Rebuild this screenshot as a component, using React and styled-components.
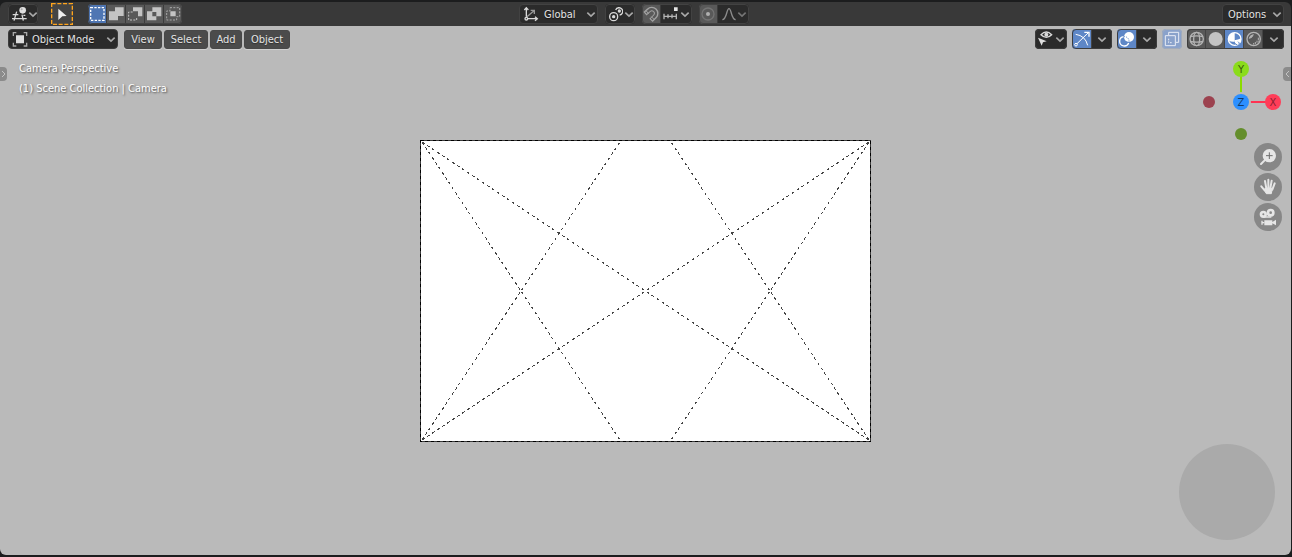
import React from "react";
import styled, { createGlobalStyle, css } from "styled-components";

const GlobalStyle = createGlobalStyle`
  * { box-sizing: border-box; }
  body { margin: 0; background: #1c1d1e; }
  body, button, select {
    font-family: "DejaVu Sans Condensed", "DejaVu Sans", sans-serif;
    font-size: 11px;
    line-height: 18px;
  }
`;

const Editor = styled.div`
  display: flex;
  flex-direction: column;
  min-height: 100vh;
  padding: 2px 1px 2px 0;
`;

const TopBar = styled.header`
  display: grid;
  grid-template-columns: 1fr auto 1fr;
  align-items: center;
  height: 24px;
  padding: 0 7px 0 8px;
  background: #393939;
  border-radius: 6px 6px 0 0;
`;

const Cluster = styled.div`
  display: flex;
  align-items: center;
  gap: ${(p) => p.$gap || 0}px;
  justify-content: ${(p) => (p.$end ? "flex-end" : "flex-start")};
  padding-right: ${(p) => p.$trail || 0}px;
`;

const edge = (p) => (p.$pale ? "#a2abba" : p.$raised ? "#3d3d3d" : "#424242");

const Group = styled.div`
  display: flex;
  height: 20px;
  border-radius: 4px;
  overflow: hidden;
  position: relative;
  background: ${(p) => (p.$raised ? "#444" : "#3c3c3c")};
  gap: 1px;
  &::after {
    content: "";
    position: absolute;
    inset: 0;
    border: 1px solid ${edge};
    border-radius: 4px;
    pointer-events: none;
  }
`;

const tones = {
  dark: "#2b2b2b",
  grey: "#595959",
  blue: "#4f76b3",
  bright: "#5e87c7",
  pale: "#8aa2cb",
};

const Cell = styled.button`
  display: flex;
  align-items: center;
  justify-content: ${(p) => (p.$center ? "center" : "flex-start")};
  flex: none;
  width: ${(p) => p.$w || 18}px;
  height: 20px;
  padding: 0;
  border: 0;
  color: #d9d9d9;
  background: ${(p) => tones[p.$tone || "dark"]};
`;

const ToolButton = styled.button`
  width: 22px;
  height: 22px;
  padding: 0;
  border: 0;
  background: #444;
  display: flex;
`;

const fieldLook = css`
  height: 20px;
  border: 1px solid ${edge};
  border-radius: 4px;
  background: #2b2b2b;
  color: #e4e4e4;
  text-shadow: 0 1px 1px #0008;
`;

const Field = styled.label`
  ${fieldLook}
  display: flex;
  align-items: center;
  width: ${(p) => p.$w}px;
`;

const FieldSelect = styled.select`
  appearance: none;
  flex: 1;
  min-width: 0;
  height: 20px;
  padding: 2px 0 0;
  margin-left: 4px;
  border: 0;
  background: transparent;
  color: inherit;
  text-shadow: inherit;
`;

const OptionsButton = styled.button`
  ${fieldLook}
  display: flex;
  align-items: center;
  justify-content: space-between;
  width: 62px;
  padding: 0 0 0 5px;
`;

const OptionsText = styled.span`
  padding-top: 2px;
`;

const MenuButton = styled.button`
  height: 19px;
  width: ${(p) => p.$w}px;
  padding: 0;
  border: 1px solid #484848;
  border-radius: 3px;
  background: #4b4b4b;
  color: #e4e4e4;
  box-shadow: 0 1px 0 #d0d0d0;
  text-shadow: 0 1px 1px #0006;
`;

const Viewport = styled.main`
  flex: 1;
  position: relative;
  display: flex;
  flex-direction: column;
  overflow: hidden;
  background: #bababa;
  border-radius: 0 0 6px 6px;
`;

const ViewBar = styled.div`
  position: relative;
  display: flex;
  justify-content: space-between;
  align-items: center;
  height: 26px;
  padding: 0 7px 0 8px;
`;

const ViewInfo = styled.div`
  position: relative;
  width: max-content;
  padding: 7px 19px;
  color: #fff;
  line-height: 20px;
  text-shadow: 1px 1px 2px #0009;
`;

const CameraFrame = styled.svg`
  position: absolute;
  top: 50%;
  left: 50%;
  width: 452px;
  height: 302px;
  margin: -151px 0 0 -226px;
`;

const SideTab = styled.button`
  position: absolute;
  top: 41px;
  ${(p) => p.$side}: 0;
  width: ${(p) => (p.$side === "left" ? 7 : 8)}px;
  height: 14px;
  padding: 0;
  border: 0;
  border-radius: ${(p) => (p.$side === "left" ? "0 4px 4px 0" : "4px 0 0 4px")};
  background: #8b8b8b;
  display: flex;
  align-items: center;
  justify-content: center;
`;

const AxisGizmo = styled.svg`
  position: absolute;
  top: 34px;
  right: 7px;
  width: 84px;
  height: 84px;
`;

const NavStack = styled.div`
  position: absolute;
  top: 117px;
  right: 9px;
  display: flex;
  flex-direction: column;
  gap: 2px;
`;

const NavButton = styled.button`
  width: 28px;
  height: 28px;
  padding: 0;
  border: 0;
  border-radius: 50%;
  background: #878787;
  display: flex;
`;

const NavPad = styled.div`
  position: absolute;
  right: 16px;
  bottom: 15px;
  width: 96px;
  height: 96px;
  border-radius: 50%;
  background: #aaaaaa;
`;

const IconSvg = styled.svg`
  flex: none;
`;

const Icon = ({ w = 18, h = 20, children }) => (
  <IconSvg width={w} height={h} viewBox={`0 0 ${w * 3} ${h * 3}`} fill="none"
    stroke="#d9d9d9" strokeWidth="4" aria-hidden="true">
    {children}
  </IconSvg>
);

const Chevron = ({ color = "#a8a8a8" }) => (
  <IconSvg width="12" height="20" viewBox="0 0 36 60" fill="none" stroke={color}
    strokeWidth="5" aria-hidden="true">
    <path d="M7 26 L18 36 L29 26" />
  </IconSvg>
);

const SELECT_MODES = [
  ["Set selection", <path d="M8 11H48V49H8Z" stroke="#fff" strokeWidth="4" strokeDasharray="7 4" />],
  ["Extend selection", <path d="M24 10H50V36H33V49H6V22H24Z" fill="#c4c4c4" stroke="none" />],
  ["Subtract selection", <>
    <path d="M21 10H49V37H36V22H21Z" fill="#c4c4c4" stroke="none" />
    <path d="M20 24H8V48H32V38" stroke="#c4c4c4" strokeWidth="3" strokeDasharray="6 4" />
  </>],
  ["Invert selection", <path fillRule="evenodd" d="M22 10H49V37H34V49H6V22H22ZM22 24V37H34V24Z" fill="#c4c4c4" stroke="none" />],
  ["Intersect selection", <>
    <path d="M19 22H35V37H19Z" fill="#c4c4c4" stroke="none" />
    <path d="M18 11H47V38H38V48H8V21H18Z" stroke="#a8a8a8" strokeWidth="3" strokeDasharray="6 4" />
  </>],
];

const SHADING = [
  ["Wireframe", "grey", <g stroke="#b4b4b4" strokeWidth="4">
    <circle cx="29" cy="30" r="20" /><ellipse cx="29" cy="30" rx="9" ry="20" />
    <path d="M10 23Q29 18 48 23M10 37Q29 42 48 37" />
  </g>],
  ["Solid", "grey", <circle cx="29" cy="30" r="21" fill="#c4c4c4" stroke="none" />],
  ["Material preview", "bright", <>
    <circle cx="29" cy="30" r="19" stroke="#fff" strokeWidth="4" />
    <path d="M29 11A19 19 0 0 0 10 34Q20 40 29 38Z" fill="#fff" stroke="none" />
    <path d="M28 34Q40 33 48 28A19 19 0 0 1 36 48Q29 44 28 34Z" fill="#fff" stroke="none" />
    <path d="M32 44l5 5M39 38l5 5M39 47l5-5" stroke="#5e87c7" strokeWidth="3" />
  </>],
  ["Rendered", "grey", <g stroke="#b4b4b4" strokeWidth="4">
    <circle cx="29" cy="30" r="20" />
    <path d="M16 28A14 14 0 0 1 28 17L23 25Z" fill="#b4b4b4" strokeWidth="3" />
    <path d="M43 26V33M39 35V41M34 39V45M44 35V38M29 42V47" strokeWidth="3" />
  </g>],
];

const ToolSelect = () => (
  <ToolButton aria-label="Select tool" aria-pressed="true">
    <Icon w={22} h={22}>
      <path d="M2 2H64V64H2Z" stroke="#ffa41c" strokeWidth="4" strokeDasharray="12 5" />
      <path d="M22 17L47 39L34 40L22 51Z" fill="#eee" stroke="none" />
    </Icon>
  </ToolButton>
);

function HeaderTop() {
  return (
    <TopBar>
      <Cluster $gap={13}>
        <Group>
          <Cell $w={30} aria-label="Editor type">
            <Icon w={19}>
              <path d="M14 32H31M12 44H56M26 23L18 50M42 32L46 50M46 34H52" />
              <circle cx="44" cy="19" r="10" fill="#e0e0e0" stroke="none" />
              <circle cx="41" cy="16" r="3" fill="#aaa" stroke="none" />
            </Icon>
            <Chevron />
          </Cell>
        </Group>
        <Cluster $gap={15}>
          <ToolSelect />
          <Group>
            {SELECT_MODES.map(([label, art], i) => (
              <Cell key={label} $tone={i ? "grey" : "blue"} aria-label={label} aria-pressed={i === 0}>
                <Icon>{art}</Icon>
              </Cell>
            ))}
          </Group>
        </Cluster>
      </Cluster>
      <Cluster $gap={7} $trail={24}>
        <Field $w={79}>
          <Icon w={20} h={18}>
            <g transform="translate(-3 -3)">
              <path d="M22 40L45 20M35 19H46V30" stroke="#999" />
              <path d="M22 38V12M16 18L22 11L28 18M26 44H54M48 38L55 44L48 50" />
              <circle cx="22" cy="44" r="4" />
            </g>
          </Icon>
          <FieldSelect aria-label="Transform orientation"><option>Global</option></FieldSelect>
          <Chevron />
        </Field>
        <Group>
          <Cell $w={30} aria-label="Pivot point">
            <Icon>
              <circle cx="26" cy="38" r="12" />
              <path d="M32 18A11 11 0 1 1 44 33" />
              <circle cx="26" cy="38" r="5" fill="#d9d9d9" stroke="none" />
              <circle cx="43" cy="21" r="5" fill="#d9d9d9" stroke="none" />
            </Icon>
            <Chevron />
          </Cell>
        </Group>
        <Group>
          <Cell $tone="grey" aria-label="Snap">
            <Icon>
              <path d="M9 29L20 19A13 13 0 0 1 39 37L27 49" stroke="#a2a2a2" strokeWidth="14" />
              <path d="M12 27L21 19A12 12 0 0 1 38 37L29 46" stroke="#595959" strokeWidth="7" />
              <path d="M12 20L20 29M28 38L36 46" stroke="#a2a2a2" strokeWidth="3" />
            </Icon>
          </Cell>
          <Cell $w={31} aria-label="Snap to">
            <Icon>
              <path d="M8 37H47M9 29V46M21 31V43M33 31V43M46 29V46" stroke="#b5b5b5" />
              <path d="M39 10H50V21H39Z" fill="#e6e6e6" stroke="none" />
            </Icon>
            <Chevron />
          </Cell>
        </Group>
        <Group>
          <Cell $tone="grey" aria-label="Proportional editing">
            <Icon>
              <circle cx="27" cy="30" r="18" stroke="#747474" />
              <circle cx="27" cy="30" r="6" fill="#b0b0b0" stroke="none" />
            </Icon>
          </Cell>
          <Cell $w={31} aria-label="Proportional falloff">
            <Icon>
              <path d="M13 47C27 47 25 14 33 14S39 47 53 47" stroke="#8c8c8c" />
            </Icon>
            <Chevron color="#757575" />
          </Cell>
        </Group>
      </Cluster>
      <Cluster $end>
        <OptionsButton><OptionsText>Options</OptionsText><Chevron /></OptionsButton>
      </Cluster>
    </TopBar>
  );
}

function HeaderView() {
  return (
    <ViewBar>
      <Cluster $gap={6}>
        <Field $w={110} $raised>
          <Icon w={19} h={18}>
            <path d="M21 16H45V40H21Z" fill="#ddd" stroke="none" />
            <path d="M13 18V8H22M44 8H53V18M53 38V48H44M22 48H13V38" stroke="#a8a8a8" />
          </Icon>
          <FieldSelect aria-label="Mode"><option>Object Mode</option></FieldSelect>
          <Chevron />
        </Field>
        <Cluster as="nav" $gap={2}>
          <MenuButton $w={38}>View</MenuButton>
          <MenuButton $w={44}>Select</MenuButton>
          <MenuButton $w={32}>Add</MenuButton>
          <MenuButton $w={46}>Object</MenuButton>
        </Cluster>
      </Cluster>
      <Cluster $gap={5}>
        <Group $raised>
          <Cell $w={32} aria-label="Object types visibility">
            <Icon w={19}>
              <path d="M18 17Q34 1 50 17Q34 33 18 17Z" />
              <circle cx="34" cy="17" r="6" fill="#d9d9d9" stroke="none" />
              <path d="M9 26L35 37L24 40L20 50Z" fill="#e0e0e0" stroke="none" />
            </Icon>
            <Chevron />
          </Cell>
        </Group>
        <Group $raised>
          <Cell $w={19} $tone="bright" aria-label="Show gizmo" aria-pressed="true">
            <Icon w={19}>
              <g stroke="#fff" strokeWidth="3">
                <path d="M11 16Q40 20 47 49M15 44L48 12" />
                <path d="M37 10H51V23" strokeWidth="4" />
                <circle cx="12" cy="47" r="4" />
              </g>
            </Icon>
          </Cell>
          <Cell $w={20} $center aria-label="Gizmo options"><Chevron /></Cell>
        </Group>
        <Group $raised>
          <Cell $w={19} $tone="bright" aria-label="Show overlays" aria-pressed="true">
            <Icon w={19}>
              <circle cx="36" cy="24" r="15" fill="#fff" stroke="none" />
              <path d="M20 23A14 14 0 1 0 35 42" stroke="#fff" strokeWidth="4" />
              <path d="M20 23A14 14 0 0 1 36 39" stroke="#5e87c7" strokeWidth="3" strokeDasharray="4 3" />
            </Icon>
          </Cell>
          <Cell $w={20} $center aria-label="Overlay options"><Chevron /></Cell>
        </Group>
        <Group $raised $pale>
          <Cell $w={20} $tone="pale" aria-label="Toggle X-ray">
            <Icon w={20}>
              <g stroke="#e8edf6" strokeWidth="3">
                <path d="M20 18V10H50V40H42M10 20H40V50H10Z" />
                <path d="M20 29V41H32" strokeDasharray="5 3" />
              </g>
            </Icon>
          </Cell>
        </Group>
        <Group $raised>
          {SHADING.map(([label, tone, art]) => (
            <Cell key={label} $tone={tone} aria-label={label} aria-pressed={tone === "bright"}>
              <Icon>{art}</Icon>
            </Cell>
          ))}
          <Cell $w={21} $center aria-label="Shading options"><Chevron /></Cell>
        </Group>
      </Cluster>
    </ViewBar>
  );
}

const GUIDES = [
  "M2 2L449 300", "M449 2L2 300", "M2 2L200 300", "M2 300L200 2",
  "M449 2L251 300", "M449 300L251 2",
];

export default function App() {
  return (
    <>
      <GlobalStyle />
      <Editor>
        <HeaderTop />
        <Viewport>
          <CameraFrame viewBox="0 0 452 302" fill="none" shapeRendering="crispEdges" role="img" aria-label="Camera frame">
            <rect x="0" y="0" width="451" height="302" fill="#fff" />
            <rect x="0.5" y="0.5" width="450" height="301" stroke="#3a3a3a" />
            <rect x="0.5" y="0.5" width="450" height="301" stroke="#000" strokeDasharray="3 3" />
            {GUIDES.map((d) => <path key={d} d={d} stroke="#444" strokeDasharray="3 3" />)}
          </CameraFrame>
          <HeaderView />
          <ViewInfo>
            <div>Camera Perspective</div>
            <div>(1) Scene Collection | Camera</div>
          </ViewInfo>
          <SideTab $side="left" aria-label="Show toolbar">
            <svg width="6" height="8" viewBox="0 0 6 8" fill="none" stroke="#c4c4c4"><path d="M1 1L4 4L1 7" /></svg>
          </SideTab>
          <SideTab $side="right" aria-label="Show sidebar">
            <svg width="6" height="8" viewBox="0 0 6 8" fill="none" stroke="#c4c4c4"><path d="M5 1L2 4L5 7" /></svg>
          </SideTab>
          <AxisGizmo viewBox="0 0 84 84" fontSize="11" textAnchor="middle">
            <path d="M41 42V9" stroke="#8bdc00" strokeWidth="2" />
            <path d="M42 42H74" stroke="#ff3352" strokeWidth="2" />
            <circle cx="41" cy="42" r="10" fill="#bababa" />
            <circle cx="9" cy="42" r="6" fill="#9c424f" />
            <circle cx="41" cy="74" r="6" fill="#648e2c" />
            <circle cx="41" cy="42" r="8" fill="#2c8fff" />
            <circle cx="41" cy="9" r="8" fill="#8bdc1b" />
            <circle cx="73" cy="42" r="8" fill="#ff3d58" />
            <text x="41" y="46" fill="#123a66">Z</text>
            <text x="41" y="13" fill="#38580b">Y</text>
            <text x="73" y="46" fill="#8a1f30">X</text>
          </AxisGizmo>
          <NavStack>
            <NavButton aria-label="Zoom">
              <Icon w={28} h={28}>
                <path d="M34 50L21 63" stroke="#e6e6e6" strokeWidth="6" strokeLinecap="round" />
                <circle cx="46" cy="38" r="20" fill="#e6e6e6" stroke="none" />
                <path d="M46 28V48M36 38H56" stroke="#6e6e6e" strokeWidth="3" />
              </Icon>
            </NavButton>
            <NavButton aria-label="Pan">
              <Icon w={28} h={28}>
                <g stroke="#e6e6e6" strokeWidth="6" strokeLinecap="round">
                  <path d="M22 40L32 52M33 24L37 46M43 20V44M53 23L49 46M62 31L55 50" />
                  <path d="M34 46H55L52 62H37L31 52Z" fill="#e6e6e6" strokeWidth="3" strokeLinejoin="round" />
                </g>
              </Icon>
            </NavButton>
            <NavButton aria-label="Camera view">
              <Icon w={28} h={28}>
                <circle cx="28" cy="34" r="7" stroke="#e6e6e6" strokeWidth="8" />
                <circle cx="50" cy="29" r="8" stroke="#e6e6e6" strokeWidth="8" />
                <path d="M28 42H52" stroke="#e6e6e6" strokeWidth="5" />
                <path d="M31 52H55V57L66 50V67L55 61V67H31Z" fill="#e6e6e6" stroke="none" />
                <path d="M24 53V65M24 59H31" stroke="#e6e6e6" />
              </Icon>
            </NavButton>
          </NavStack>
          <NavPad />
        </Viewport>
      </Editor>
    </>
  );
}
